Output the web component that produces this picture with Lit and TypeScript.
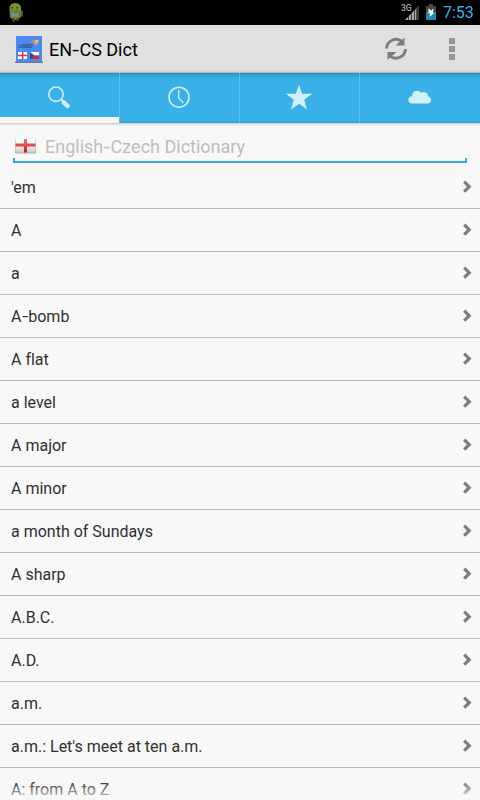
import { LitElement, html, css, svg } from "lit";
import { customElement, state } from "lit/decorators.js";

const WORDS = [
  "'em", "A", "a", "A-bomb", "A flat", "a level", "A major", "A minor",
  "a month of Sundays", "A sharp", "A.B.C.", "A.D.", "a.m.",
  "a.m.: Let's meet at ten a.m.", "A: from A to Z",
];

const TAB_ICONS = [
  svg`<circle cx="56" cy="21.200" r="7.200" fill="none" stroke="#d3f0fa" stroke-width="1.600"/>
      <path d="M61.200 26.400l2 2" stroke="#d3f0fa" stroke-width="1.800"/>
      <path d="M63.700 29.300l3.900 3.700" stroke="#d3f0fa" stroke-width="4.400" stroke-linecap="round"/>`,
  svg`<circle cx="59" cy="24.200" r="10" fill="none" stroke="#d3f0fa" stroke-width="1.600"/>
      <path d="M58.700 17v8l4.700 4.700" fill="none" stroke="#d3f0fa" stroke-width="1.400"/>`,
  svg`<path d="M59 11.800l3.100 8.900h10l-7.900 6.100 2.800 9.600-8-5.600-8 5.600 2.800-9.600-7.900-6.100h10z" fill="#d0f0f8"/>`,
  svg`<path d="M52 30.600a3.700 3.700 0 0 1 .2-7.400 4.900 4.900 0 0 1 9-3.200 4.300 4.300 0 0 1 7.100 3.400 3.700 3.700 0 0 1-.1 7.200z" fill="#d0f0f8"/>`,
];

// Hyphens are drawn wider than the font's own glyph.
const label = (text: string) =>
  text.split("-").map((part, i) => (i ? html`<span class="hy">-</span>${part}` : part));

@customElement("app-root")
export class AppRoot extends LitElement {
  @state() private selected = 0;

  static styles = css`
    :host {
      display: flex;
      flex-direction: column;
      width: 480px;
      height: 800px;
      overflow: hidden;
      background: #f8f8f8;
      font-family: Roboto, sans-serif;
      font-variant-ligatures: none;
      box-sizing: border-box;
    }
    svg { display: block; flex: none; }
    .hy {
      display: inline-block;
      transform: scaleX(1.35);
      margin: 0 1.200px;
    }
    .status {
      height: 25px;
      flex: none;
      display: flex;
      background: #000;
      color: #33b5e5;
    }
    .gap { flex: 1; }
    .clock {
      width: 37px;
      font-size: 16px;
      line-height: 25px;
      white-space: nowrap;
    }
    .bar {
      height: 48px;
      flex: none;
      display: flex;
      box-sizing: border-box;
      background: linear-gradient(#e0e0e0 0 45px, #d8d4d2 45px 47px, #b5bcc0 47px);
    }
    .title {
      font-size: 18px;
      line-height: 49px;
      color: #000;
      flex: 1;
    }
    .tabs {
      height: 50px;
      flex: none;
      display: grid;
      grid-template-columns: repeat(4, 1fr);
      background: linear-gradient(#2b86b2 0 1px, #319fd2 1px, #36a8df 4px, #39b0e8 8px, #39b0e8 46px, #33a8e0 50px);
    }
    .tab {
      border-right: 1px solid #5dc0f0;
      box-sizing: border-box;
      height: 50px;
    }
    .tab:last-child { border-right: 0; }
    .tab.on { box-shadow: inset 0 -6px #f8f8f8; }
    .shade {
      height: 3px;
      flex: none;
      background: linear-gradient(#cfcfcf 0 1px, #e4e1e0 1px 2px, #f1f1f1 2px);
    }
    .search {
      height: 37px;
      flex: none;
      margin: 0 13px;
      display: flex;
      flex-direction: column;
    }
    .field { display: flex; height: 32px; }
    .hint {
      font-size: 18px;
      line-height: 42px;
      color: #bebebe;
      margin-left: 9px;
    }
    .line {
      height: 5px;
      box-sizing: border-box;
      border: 2px solid #33a9de;
      border-top: 0;
    }
    .list { flex: 1; margin-top: 3px; overflow: hidden; position: relative; }
    .row {
      height: 43px;
      box-sizing: border-box;
      border-bottom: 1px solid #bdbdbd;
      padding: 0 8px 0 11px;
      display: flex;
      justify-content: space-between;
      font-size: 16px;
      line-height: 43px;
      color: #303030;
    }
    .row svg { margin-top: 14px; }
    .fade {
      position: absolute;
      left: 0;
      right: 0;
      bottom: 0;
      height: 19px;
      background: linear-gradient(rgba(248, 248, 248, 0), rgba(248, 248, 248, 0.6) 14px, #f8f8f8 15px);
    }
  `;

  render() {
    return html`
      <div class="status">
        <svg width="30" height="25" viewBox="0 0 30 25">
          <path d="M9.500 9Q9.500 3 15 3t6 5v2H9.500z" fill="#7c8f38"/>
          <path d="M20 10.500h2.800v6H20z" fill="#526620"/>
          <path d="M9.500 10h11.500v6.500q-2 3.500-5.500 3.500t-5.500-3z" fill="#6d8030"/>
          <path d="M12.500 18h2v4h-2zm4 0h2v3h-2z" fill="#435317"/>
          <path d="M11.500 12l4 2 3-1.500v4.500l-3-1-4 1.500z" fill="#6a91ac"/>
          <path d="M11.500 7h1.500v1.500h-1.500zm5 0h1.500v1.500h-1.500z" fill="#263018"/>
        </svg>
        <div class="gap"></div>
        <svg width="43" height="25" viewBox="400 0 43 25">
          <text x="401" y="10.500" font-size="8.500" font-weight="500" fill="#aaa">3G</text>
          <path d="M405 20L419 5v15z" fill="#3a3a3a"/>
          <path d="M405 20l3-3v3zm4 0v-4l2-2v6zm3 0v-7l2-2v9zm3 0V10l1.200-1.200V20z" fill="#aaa"/>
          <path d="M429 4h4v2h3v5.500h-10V6h3z" fill="#4a4a4a"/>
          <path d="M426 11.500h10V20h-10z" fill="#1d8aae"/>
          <path d="M428.500 8.500l2.700 2 2.300-2-.5 4 1 .5-4.500 4 .8-3.500-1.800-.5z" fill="#fff"/>
        </svg>
        <div class="clock">7:53</div>
      </div>
      <div class="bar">
        <svg width="49" height="47" viewBox="0 25 49 47">
          <path d="M15 61.500h28v1.500H15z" fill="#77787d"/>
          <path d="M16 36h26v26H16z" fill="#4889f2"/>
          <text x="18.500" y="47.500" font-size="5" font-weight="700" fill="#354a69" textLength="14" lengthAdjust="spacingAndGlyphs">LANGEO</text>
          <path d="M26 40.500l8 2.500-4-4 5 2.500-1-2.500 3 1.500 2 1.500-4 5 .5-3z" fill="#d9a13f"/>
          <path d="M35 40h4l-3 4z" fill="#e5bd73"/>
          <path d="M18 52h9v7h-9z" fill="#fff"/>
          <path d="M22 52h1.400v7H22zm-4 2.800h9v1.400h-9z" fill="#ee2c38"/>
          <path d="M30 52h9v3.500h-9z" fill="#fff"/>
          <path d="M30 55.500h9V59h-9z" fill="#dc2733"/>
          <path d="M30 52l4.500 3.500L30 59z" fill="#254e8d"/>
        </svg>
        <div class="title">${label("EN-CS Dict")}</div>
        <svg width="96" height="47" viewBox="384 25 96 47">
          <path d="M386.500 48.500a9.500 9.500 0 0 1 15.500-7" fill="none" stroke="#7c7c7c" stroke-width="2.800"/>
          <path d="M404.500 37.500v8h-9z" fill="#7c7c7c"/>
          <path d="M405.500 49a9.500 9.500 0 0 1-15.500 7" fill="none" stroke="#7c7c7c" stroke-width="2.800"/>
          <path d="M387.500 60v-8h9z" fill="#7c7c7c"/>
          <path d="M449 38h6v6h-6zm0 8h6v6h-6zm0 8h6v6h-6z" fill="#969696"/>
        </svg>
      </div>
      <div class="tabs">
        ${TAB_ICONS.map((icon, i) => html`
          <div class="tab ${this.selected === i ? "on" : ""}" @click=${() => (this.selected = i)}>
            <svg width="119" height="44" viewBox="0 0 119 44">${icon}</svg>
          </div>`)}
      </div>
      <div class="shade"></div>
      <div class="search">
        <div class="field">
          <svg width="23" height="32" viewBox="13 126 23 32">
            <defs>
              <linearGradient id="w" x2="0" y2="1"><stop stop-color="#fff"/><stop offset=".5" stop-color="#f4f4f4"/><stop offset="1" stop-color="#c9c9c9"/></linearGradient>
              <linearGradient id="r" x2="0" y2="1"><stop stop-color="#f37a70"/><stop offset="1" stop-color="#d31212"/></linearGradient>
            </defs>
            <rect x="15" y="139" width="21" height="14.500" rx="1" fill="#b0b0b0"/>
            <rect x="15.500" y="139" width="20" height="13.500" rx="1" fill="url(#w)"/>
            <path d="M24 139h3v13.500h-3zm-8.500 4.500h20v3h-20z" fill="url(#r)"/>
          </svg>
          <div class="hint">${label("English-Czech Dictionary")}</div>
        </div>
        <div class="line"></div>
      </div>
      <div class="list">
        ${WORDS.map((w) => html`
          <div class="row">
            <span>${label(w)}</span>
            <svg width="9" height="14" viewBox="0 0 9 14"><path d="M1.200 1.700L6.200 6.700l-5 5" fill="none" stroke="#7d7d7d" stroke-width="3.200"/></svg>
          </div>`)}
        <div class="fade"></div>
      </div>
    `;
  }
}
